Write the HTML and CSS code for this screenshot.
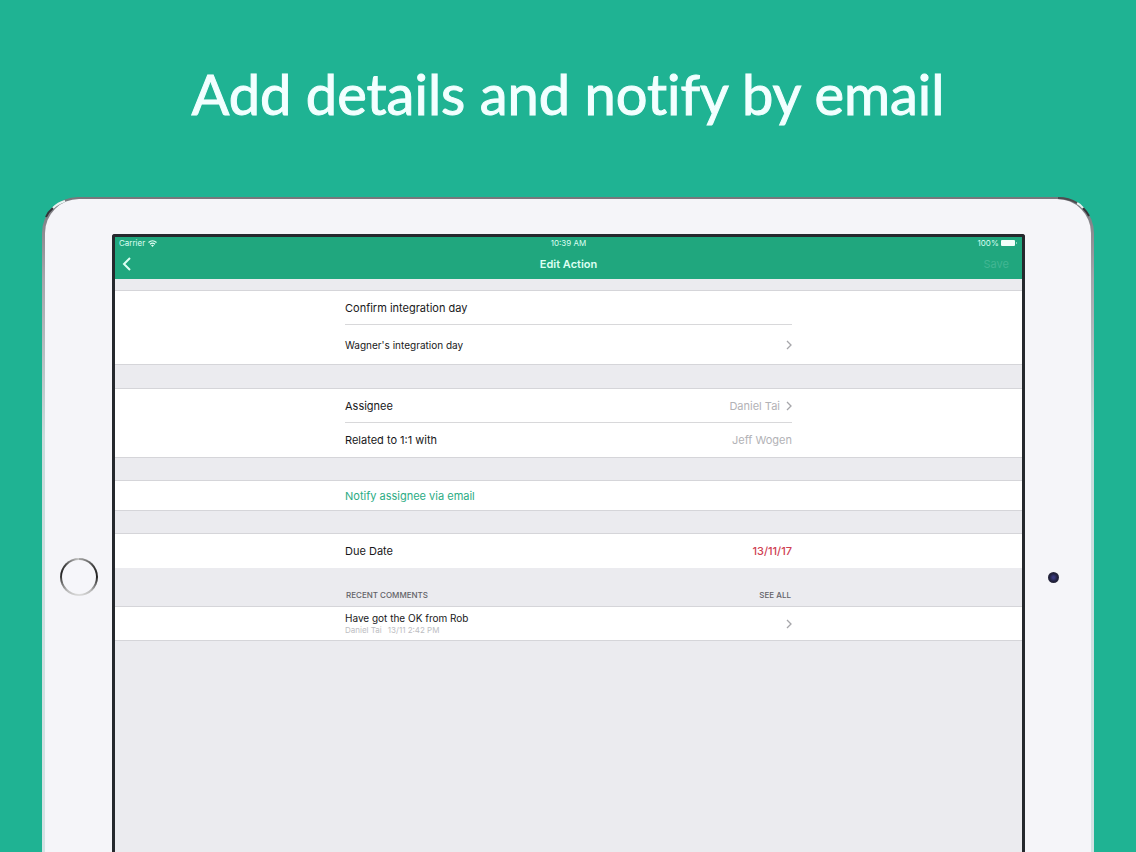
FILE: index.html
```html
<!DOCTYPE html>
<html lang="en">
<head>
    <meta charset="UTF-8">
    <meta name="viewport" content="width=device-width, initial-scale=1.0">
    <title>Edit Action</title>
    <link rel="stylesheet" href="styles.css">
</head>
<body>

<h1 class="headline">Add details and notify by email</h1>

<div class="tablet">
    <svg class="corner corner-left" width="36" height="36" viewBox="0 0 36 36" fill="none" stroke-width="2">
        <path d="M4 20 Q6 15 11 11" stroke="#35353a"/>
        <path d="M11 11 Q16 6 23 4" stroke="#e8f4f2"/>
    </svg>
    <svg class="corner corner-right" width="36" height="36" viewBox="0 0 36 36" fill="none" stroke-width="2">
        <path d="M5 19 Q7 15 11 11" stroke="#35353a"/>
        <path d="M11 11 Q13 8 17 6" stroke="#e8f4f2"/>
        <path d="M17 6 Q25 1 36 1" stroke="#4c4c50"/>
    </svg>
    <div class="bezel">
        <div class="side">
            <button class="home" aria-label="Home"></button>
        </div>

        <div class="screen">
            <header class="top">
                <div class="status">
                    <span class="carrier">Carrier
                        <svg width="9" height="7" viewBox="0 0 18 14" fill="none" stroke="#e2fff4" stroke-width="2.4">
                            <path d="M1 5 Q9 -2 17 5"/>
                            <path d="M4 8.500 Q9 4 14 8.500"/>
                            <path d="M6 10.500 Q9 8 12 10.500 L9 14 Z" fill="#e2fff4" stroke="none"/>
                        </svg>
                    </span>
                    <span>10:39 AM</span>
                    <span class="power">100%
                        <svg width="17" height="6" viewBox="0 0 17 6" fill="#f2fffa">
                            <rect width="14" height="6" rx="1"/>
                            <rect x="15" y="2" width="1" height="2" opacity=".5"/>
                        </svg>
                    </span>
                </div>
                <div class="nav">
                    <button class="back" aria-label="Back">
                        <svg width="10" height="14" viewBox="0 0 10 14" fill="none" stroke="#dcfff2" stroke-width="2">
                            <path d="M8 1 L2 7 L8 13"/>
                        </svg>
                    </button>
                    <h2>Edit Action</h2>
                    <button class="save" disabled>Save</button>
                </div>
            </header>

            <main>
                <section class="group first">
                    <div class="rows">
                        <div class="row line">
                            <input class="field" type="text" value="Confirm integration day" aria-label="Action">
                        </div>
                        <button class="row tall">
                            <span class="small">Wagner's integration day</span>
                            <svg class="chevron" width="6" height="10" viewBox="0 0 6 10"><path d="M1 1 L5 5 L1 9"/></svg>
                        </button>
                    </div>
                </section>

                <section class="group">
                    <div class="rows">
                        <button class="row line">
                            <span>Assignee</span>
                            <span class="value">Daniel Tai
                                <svg class="chevron" width="6" height="10" viewBox="0 0 6 10"><path d="M1 1 L5 5 L1 9"/></svg>
                            </span>
                        </button>
                        <div class="row">
                            <span>Related to 1:1 with</span>
                            <span class="value">Jeff Wogen</span>
                        </div>
                    </div>
                </section>

                <section class="group">
                    <div class="rows">
                        <button class="row short notify">Notify assignee via email</button>
                    </div>
                </section>

                <section class="group due">
                    <div class="rows">
                        <button class="row">
                            <span>Due Date</span>
                            <span class="late">13/11/17</span>
                        </button>
                    </div>
                </section>

                <div class="rows section-title">
                    <h3>RECENT COMMENTS</h3>
                    <a href="#">SEE ALL</a>
                </div>

                <section class="group">
                    <div class="rows">
                        <button class="row comment">
                            <span class="comment-text">
                                <span>Have got the OK from Rob</span>
                                <span class="meta"><span>Daniel Tai</span><span>13/11 2:42 PM</span></span>
                            </span>
                            <svg class="chevron" width="6" height="10" viewBox="0 0 6 10"><path d="M1 1 L5 5 L1 9"/></svg>
                        </button>
                    </div>
                </section>
            </main>
        </div>

        <div class="side">
            <span class="camera"></span>
        </div>
    </div>
</div>

</body>
</html>
```

FILE: styles.css
```css
* {
    box-sizing: border-box;
}
body {
    display: flex;
    flex-direction: column;
    min-height: 100vh;
    margin: 0;
    background-color: #1fb393;
    font-family: Inter, "Liberation Sans", sans-serif;
    font-size: 11px;
    line-height: 14px;
    color: #18181a;
}
h1, h2, h3 {
    margin: 0;
}
button, input {
    padding: 0;
    border: none;
    background: none;
    font: inherit;
    color: inherit;
    text-align: left;
}
button {
    cursor: pointer;
}
.headline {
    padding: 58px 20px 67px;
    font-family: Lato, sans-serif;
    font-size: 56px;
    font-weight: 400;
    font-variant-ligatures: none;
    line-height: 72px;
    text-align: center;
    color: #f2ffff;
    -webkit-text-stroke: 1px #f2ffff;
}

/* tablet */
.tablet {
    position: relative;
    display: flex;
    flex: 1;
    margin: 0 42px;
    padding: 2px 3px 0;
    border-radius: 36px 36px 0 0;
    background: linear-gradient(#77777c, #a5a5ab 80px, #c8dcdc 240px, #d4e2e4);
}
.corner {
    position: absolute;
    top: 0;
}
.corner-left {
    left: 0;
}
.corner-right {
    right: 0;
    transform: scaleX(-1);
}
.bezel {
    display: grid;
    grid-template-columns: 67px 1fr 66px;
    flex: 1;
    padding-top: 35px;
    border-radius: 34px 34px 0 0;
    background-color: #f5f5f9;
}
.side {
    display: flex;
    justify-content: center;
    padding-top: 324px;
}
.home {
    width: 38px;
    height: 38px;
    padding: 2px;
    border-radius: 50%;
    background: conic-gradient(#aaa, #333 60deg, #222 90deg, #bbb 140deg, #ddd 180deg, #bbb 220deg, #222 280deg, #444 310deg, #ccc);
}
.home::before {
    content: "";
    display: block;
    height: 34px;
    border-radius: 50%;
    background-color: #f6f6fa;
}
.camera {
    width: 11px;
    height: 11px;
    margin-top: 14px;
    margin-right: 10px;
    border-radius: 50%;
    background: radial-gradient(circle, #38387c 1px, #20203c 4px, #33333c);
}

/* screen */
.screen {
    border: 3px solid #25282d;
    border-bottom: none;
    border-radius: 3px 3px 0 0;
    background-color: #ebebef;
}
.top {
    height: 42px;
    background-color: #20a77e;
    color: #dcfff2;
}
.status, .nav {
    display: grid;
    grid-template-columns: 1fr auto 1fr;
    align-items: center;
}
.status {
    height: 12px;
    padding: 0 4px;
    font-size: 8px;
    line-height: 12px;
}
.carrier svg {
    margin-left: 1px;
    vertical-align: -1px;
}
.power {
    text-align: right;
}
.nav {
    height: 30px;
    padding: 0 7px;
}
.nav h2 {
    font-size: 11px;
    font-weight: 600;
}
.back {
    display: flex;
    justify-self: start;
}
.save {
    justify-self: end;
    padding-right: 6px;
    color: #42b693;
}

/* form */
.group {
    margin-bottom: 22px;
    border: solid #d5d5d9;
    border-width: 1px 0;
    background-color: #fff;
}
.group.first {
    margin-top: 11px;
    margin-bottom: 23px;
}
.group.due {
    margin-bottom: 0;
    border-bottom-color: #ebebef;
}
.rows {
    width: 100%;
    max-width: 447px;
    margin: 0 auto;
}
.row {
    display: flex;
    align-items: center;
    justify-content: space-between;
    width: 100%;
    height: 34px;
}
.row.tall {
    height: 39px;
}
.row.short {
    height: 29px;
}
.row.comment {
    height: 33px;
}
.line {
    border-bottom: 1px solid #d8d8da;
}
.field {
    width: 100%;
    outline: none;
}
.small {
    font-size: 10px;
}
.chevron {
    fill: none;
    stroke: #a6a6aa;
    stroke-width: 1.3;
}
.value {
    display: flex;
    align-items: center;
    gap: 6px;
    color: #b2b2b6;
}
.notify {
    color: #2bac84;
}
.late {
    font-weight: 500;
    color: #cf4052;
}
.section-title {
    display: flex;
    justify-content: space-between;
    padding: 19px 1px 4px;
    font-size: 8px;
    font-weight: 500;
}
.section-title h3 {
    font-size: 8px;
    font-weight: 500;
}
.section-title h3, .section-title a {
    color: #626267;
    text-decoration: none;
}
.comment-text {
    display: flex;
    flex-direction: column;
    font-size: 10px;
}
.meta {
    display: flex;
    gap: 6px;
    font-size: 8px;
    line-height: 11px;
    color: #bdbdc2;
}
```
